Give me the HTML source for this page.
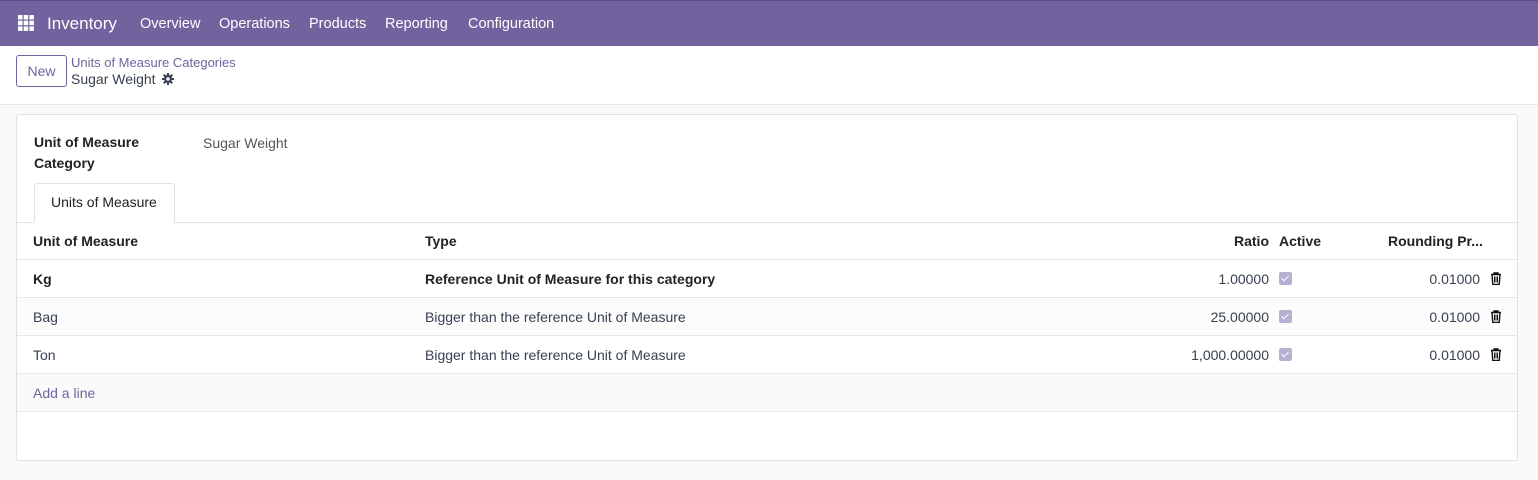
<!DOCTYPE html>
<html><head><style>
*{box-sizing:border-box;margin:0;padding:0}
body{width:1538px;height:480px;background:#f9fafb;font-family:"Liberation Sans",sans-serif;font-size:14px;color:#374151;position:relative;overflow:hidden}
.nav{position:absolute;left:0;top:0;width:1538px;height:46px;background:#71639e;color:#fff;border-top:1px solid #5b5080}
.nav span{position:absolute;top:15px;font-size:14.5px}
.cp{position:absolute;left:0;top:46px;width:1538px;height:59px;background:#fff;border-bottom:1px solid #e5e7eb}
.btn{position:absolute;left:16px;top:9px;width:51px;height:32px;border:1px solid #71639e;border-radius:3px;color:#71639e;text-align:center;line-height:30px}
.card{position:absolute;left:16px;top:114px;width:1502px;height:347px;background:#fff;border:1px solid #dee2e6;border-radius:3px}
.t{position:absolute;white-space:nowrap}
.row{position:absolute;left:0;width:1500px;height:38px;border-bottom:1px solid #e5e7eb}
.row .t{top:11px}
.r{text-align:right}
.chk{position:absolute;width:13px;height:13px;background:#b8b0d0;border-radius:2px;top:12px;left:1262px}
.chk:after{content:"";position:absolute;left:4px;top:2px;width:3px;height:6px;border:solid #fff;border-width:0 1.5px 1.5px 0;transform:rotate(45deg)}
.trash{position:absolute;left:1473px;top:12px}
</style></head><body>
<div class="nav">
<svg style="position:absolute;left:18px;top:14px" width="16" height="16" viewBox="0 0 16 16" fill="#fff"><rect x="0" y="0" width="4.5" height="4.5"/><rect x="5.7" y="0" width="4.5" height="4.5"/><rect x="11.4" y="0" width="4.5" height="4.5"/><rect x="0" y="5.7" width="4.5" height="4.5"/><rect x="5.7" y="5.7" width="4.5" height="4.5"/><rect x="11.4" y="5.7" width="4.5" height="4.5"/><rect x="0" y="11.4" width="4.5" height="4.5"/><rect x="5.7" y="11.4" width="4.5" height="4.5"/><rect x="11.4" y="11.4" width="4.5" height="4.5"/></svg>
<span style="left:47px;top:13px;font-size:17px">Inventory</span>
<span style="left:140px">Overview</span><span style="left:219px">Operations</span><span style="left:309px">Products</span><span style="left:385px">Reporting</span><span style="left:468px">Configuration</span>
</div>
<div class="cp">
<div class="btn">New</div>
<div class="t" style="left:71px;top:9px;color:#71639e;font-size:13px">Units of Measure Categories</div>
<div class="t" style="left:71px;top:25px">Sugar Weight</div>
<svg style="position:absolute;left:162px;top:27px" width="12" height="12" viewBox="0 0 12 12"><g fill="#374151"><circle cx="6" cy="6" r="4"/><rect x="5" y="0" width="2" height="12"/><rect x="0" y="5" width="12" height="2"/><rect x="5" y="0" width="2" height="12" transform="rotate(45 6 6)"/><rect x="5" y="0" width="2" height="12" transform="rotate(-45 6 6)"/></g><circle cx="6" cy="6" r="1.7" fill="#fff"/></svg>
</div>
<div class="card">
<div class="t" style="left:17px;top:17px;font-weight:bold;color:#222;line-height:21px">Unit of Measure<br>Category</div>
<div class="t" style="left:186px;top:20px;color:#555">Sugar Weight</div>
<div style="position:absolute;left:17px;top:68px;width:141px;height:40px;border:1px solid #dee2e6;border-bottom:1px solid #fff;border-radius:3px 3px 0 0;background:#fff;z-index:2"><div class="t" style="left:16px;top:10px;color:#222">Units of Measure</div></div>
<div class="row" style="top:107px;border-top:1px solid #dee2e6;font-weight:bold;color:#222">
<div class="t" style="left:16px;top:10px">Unit of Measure</div><div class="t" style="left:408px;top:10px">Type</div>
<div class="t r" style="right:248px;top:10px">Ratio</div><div class="t" style="left:1262px;top:10px">Active</div><div class="t" style="left:1371px;top:10px">Rounding Pr...</div></div>
<div class="row" style="top:145px"><div class="t" style="left:16px;font-weight:bold;color:#222">Kg</div><div class="t" style="left:408px;font-weight:bold;color:#222">Reference Unit of Measure for this category</div><div class="t" style="right:248px">1.00000</div><div class="chk"></div><div class="t" style="right:37px">0.01000</div><svg class="trash" width="12" height="13" viewBox="0 0 12 13"><path d="M1 2.5h10M4 2.5V1h4v1.5M2 2.5l.8 10h6.4l.8-10" fill="none" stroke="#111" stroke-width="1.4"/><path d="M4.5 4.5v6M6 4.5v6M7.5 4.5v6" stroke="#111" stroke-width="1"/></svg></div>
<div class="row" style="top:183px;background:#fcfcfd"><div class="t" style="left:16px">Bag</div><div class="t" style="left:408px">Bigger than the reference Unit of Measure</div><div class="t" style="right:248px">25.00000</div><div class="chk"></div><div class="t" style="right:37px">0.01000</div><svg class="trash" width="12" height="13" viewBox="0 0 12 13"><path d="M1 2.5h10M4 2.5V1h4v1.5M2 2.5l.8 10h6.4l.8-10" fill="none" stroke="#111" stroke-width="1.4"/><path d="M4.5 4.5v6M6 4.5v6M7.5 4.5v6" stroke="#111" stroke-width="1"/></svg></div>
<div class="row" style="top:221px"><div class="t" style="left:16px">Ton</div><div class="t" style="left:408px">Bigger than the reference Unit of Measure</div><div class="t" style="right:248px">1,000.00000</div><div class="chk"></div><div class="t" style="right:37px">0.01000</div><svg class="trash" width="12" height="13" viewBox="0 0 12 13"><path d="M1 2.5h10M4 2.5V1h4v1.5M2 2.5l.8 10h6.4l.8-10" fill="none" stroke="#111" stroke-width="1.4"/><path d="M4.5 4.5v6M6 4.5v6M7.5 4.5v6" stroke="#111" stroke-width="1"/></svg></div>
<div class="row" style="top:259px;background:#fafafa"><div class="t" style="left:16px;color:#71639e">Add a line</div></div>
</div>
</body></html>
